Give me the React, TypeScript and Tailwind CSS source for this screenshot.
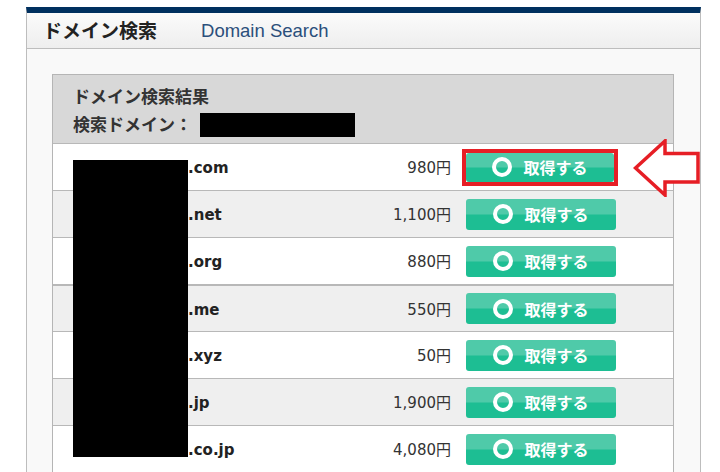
const rows = [
  { tld: ".com", price: "980円", highlight: true },
  { tld: ".net", price: "1,100円" },
  { tld: ".org", price: "880円" },
  { tld: ".me", price: "550円", thick: true },
  { tld: ".xyz", price: "50円" },
  { tld: ".jp", price: "1,900円" },
  { tld: ".co.jp", price: "4,080円" },
];

const GetButton = ({ small }: { small?: boolean }) => (
  <button
    className={
      "flex items-center justify-center gap-[11px] rounded-[3px] bg-[linear-gradient(#4fcaa9_0%,#4fcaa9_48%,#1dbe93_52%,#1dbe93_100%)] text-[16px] font-bold text-white " +
      (small ? "h-[29px] w-[148px]" : "h-[31px] w-[150px]")
    }
  >
    <span className="h-[20px] w-[20px] rounded-full border-[4px] border-white" />
    <span className="font-['Noto_Sans_CJK_JP',sans-serif] leading-none">取得する</span>
  </button>
);

export default function App() {
  return (
    <div className="relative h-[472px] w-[720px] overflow-hidden bg-white pt-[7px] pl-[26px] pr-[19px] font-['DejaVu_Sans','Noto_Sans_CJK_JP',sans-serif]">
      <div className="h-[600px] border-x border-t-[6px] border-x-[#bdbdbd] border-t-[#00305f] bg-[#f9f9f9]">
        <div className="flex h-[36px] items-center border-b border-[#bdbdbd] bg-[linear-gradient(#fbfbfb,#eeeeee)] pl-[16px]">
          <span className="font-['Noto_Sans_CJK_JP',sans-serif] text-[19px] font-bold text-[#222]">ドメイン検索</span>
          <span className="ml-[44px] font-['Liberation_Sans',sans-serif] text-[18.5px] text-[#2b4f7b]">Domain Search</span>
        </div>

        <div className="pl-[25px] pr-[26px] pt-[25px]">
          <div className="relative border border-[#b5b5b5]">
            <div className="h-[68px] bg-[#d8d8d8] pl-[20px] pt-[8px] text-[17px] font-bold leading-[28px] text-[#333]">
              <div>ドメイン検索結果</div>
              <div className="flex items-center">
                <span>検索ドメイン：</span>
                <span className="ml-[8px] inline-block h-[24px] w-[155px] bg-black" />
              </div>
            </div>

            {rows.map((r, i) => (
              <div
                key={r.tld}
                className={
                  "flex h-[47px] items-center border-t pr-[57px] " +
                  (r.thick ? "border-t-2 " : "") +
                  "border-[#b8b8b8] " +
                  (i % 2 === 1 ? "bg-[#efefef]" : "bg-white")
                }
              >
                <span className="flex-1 pl-[135px] pt-[3px] text-[15px] font-bold text-[#222]">{r.tld}</span>
                <span className="pt-[3px] text-[15px] text-[#333]">{r.price}</span>
                {r.highlight ? (
                  <div className="-mr-[2px] ml-[11px] border-[4px] border-[#e61e25]">
                    <GetButton small />
                  </div>
                ) : (
                  <div className="ml-[15px]">
                    <GetButton />
                  </div>
                )}
              </div>
            ))}

            <div className="absolute left-[20px] top-[85px] h-[297px] w-[115px] bg-black" />
          </div>
        </div>
      </div>

      <svg className="absolute left-[633px] top-[139px]" width="68" height="58" viewBox="0 0 68 58">
        <path
          d="M2.5 29 L32 2 L32 14.5 L65 14.5 L65 43 L32 43 L32 56 Z"
          fill="white"
          stroke="#e61e25"
          strokeWidth="3.5"
          strokeLinejoin="miter"
        />
      </svg>
    </div>
  );
}
